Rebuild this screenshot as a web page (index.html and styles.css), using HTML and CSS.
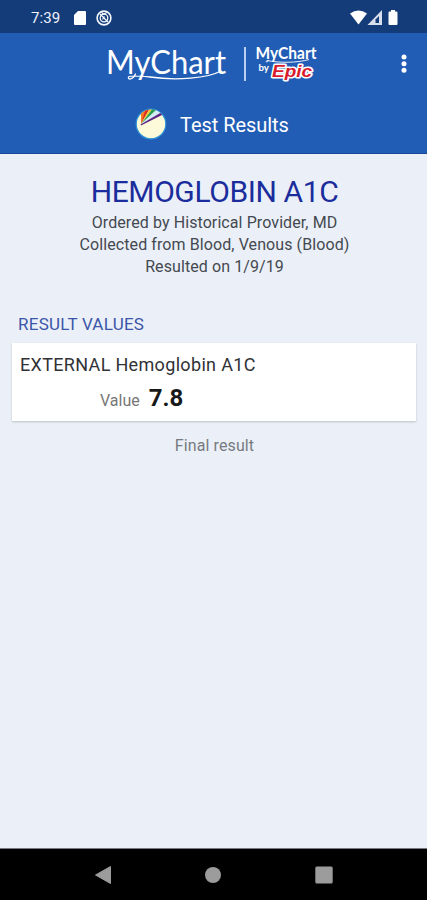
FILE: index.html
```html
<!DOCTYPE html>
<html lang="en">
<head>
<meta charset="utf-8">
<title>Test Results</title>
<link rel="stylesheet" href="styles.css">
</head>
<body>
<div class="status">
  <span class="time">7:39</span>
  <svg class="sd" width="12" height="14" viewBox="0 0 12 14"><path d="M4 0H11Q12 0 12 1V13Q12 14 11 14H1Q0 14 0 13V4Z" fill="#fff"/></svg>
  <svg class="sync" width="16" height="16" viewBox="0 0 16 16" fill="none" stroke="#f4f7fd"><circle cx="8" cy="8" r="6.900" stroke-width="1.600"/><circle cx="8" cy="8" r="3.800" stroke-width="1.300"/><path d="M4 4L12 12M6.500 9.500L8.500 6.500" stroke-width="1.300"/><path d="M5.500 2.500L8 4.200L10.500 2.500" stroke-width="1.200"/></svg>
  <svg class="signals" width="50" height="16" viewBox="0 0 50 16"><path d="M1 3.500Q9.500 -2.500 18 3.500L9.500 14.500Z" fill="#fff"/><path d="M33 0V15H18.500Z" fill="#d9dfec"/><path d="M30 6V13H26.500V9.500Z" fill="#143c78"/><path d="M42 0H46V1.500H47.500Q48.500 1.500 48.500 2.500V14Q48.500 15 47.500 15H40.500Q39.500 15 39.500 14V2.500Q39.500 1.500 40.500 1.500H42Z" fill="#fff"/></svg>
</div>
<header class="header">
  <div class="brand">
    <svg class="logo" width="214" height="46" viewBox="0 0 214 46">
      <text class="wordmark" x="-1" y="32.500" textLength="120" lengthAdjust="spacingAndGlyphs">MyChart</text>
      <path d="M28.500 33C26 39 20.500 39 21.500 36C22.500 34 33 35 43 36C70 40 101 37 114 30" fill="none" stroke="#fff" stroke-width="1.300" stroke-linecap="round"/>
      <rect x="137" y="6" width="2" height="34" fill="#b9cff3"/>
      <text class="wordmark-small" x="148.500" y="17.500" textLength="61" lengthAdjust="spacingAndGlyphs">MyChart</text>
      <path d="M162 19C160 22 158 21 160 19.500C172 22 190 22 202 18.500" fill="none" stroke="#fff" stroke-width=".9"/>
      <text class="by" x="151.500" y="30" textLength="10.500" lengthAdjust="spacingAndGlyphs">by</text>
      <text class="epic" x="165" y="35.500" textLength="40" lengthAdjust="spacingAndGlyphs">Epic</text>
    </svg>
    <svg class="more" width="6" height="20" viewBox="0 0 6 20" fill="#fff"><circle cx="3" cy="3" r="2.500"/><circle cx="3" cy="9.700" r="2.500"/><circle cx="3" cy="16.300" r="2.500"/></svg>
  </div>
  <div class="page">
    <svg width="32" height="32" viewBox="0 0 32 32">
      <defs><clipPath id="disc"><circle cx="16" cy="16" r="14.500"/></clipPath></defs>
      <circle cx="16" cy="16" r="14.800" fill="#fdfad9" stroke="#2d91d5" stroke-width="1.200"/>
      <g clip-path="url(#disc)">
        <path d="M6 16L6 0H12Z" fill="#f57a24"/><path d="M6 16L11 0H15Z" fill="#dc2d24"/><path d="M6 16L15 0H18Z" fill="#f8c92c"/><path d="M6 16L18 0L24 1Z" fill="#2ca052"/><path d="M6 16L22 1L29 4Z" fill="#d3edf6"/>
        <path d="M5.500 16.500L27 4L28 6.500L6 17.500Z" fill="#5b2583"/>
      </g>
    </svg>
    <span class="page-title">Test Results</span>
  </div>
</header>
<main class="main">
  <h1>HEMOGLOBIN A1C</h1>
  <p>Ordered by Historical Provider, MD</p>
  <p>Collected from Blood, Venous (Blood)</p>
  <p>Resulted on 1/9/19</p>
  <h2>RESULT VALUES</h2>
  <section class="card">
    <div class="name">EXTERNAL Hemoglobin A1C</div>
    <div class="result"><span class="label">Value</span><span class="value">7.8</span></div>
  </section>
  <div class="final">Final result</div>
</main>
<nav class="nav">
  <svg width="16" height="18" viewBox="0 0 16 18"><path d="M15.500 .5V17.500L.5 9Z" fill="#9c9c9c" stroke="#9c9c9c" stroke-linejoin="round"/></svg>
  <svg width="16" height="18" viewBox="0 0 16 18"><circle cx="8" cy="9" r="8" fill="#9c9c9c"/></svg>
  <svg width="18" height="18" viewBox="0 0 18 18"><rect x=".3" y=".5" width="17.400" height="17" rx="1.500" fill="#9c9c9c"/></svg>
</nav>
</body>
</html>
```
FILE: styles.css
```css
* { box-sizing: border-box; }
body { margin: 0; height: 900px; display: flex; flex-direction: column; background: #ebf0f8; font-family: Roboto, sans-serif; overflow: hidden; }
svg { display: block; flex: none; }
.status { height: 33px; background: #143c78; display: flex; align-items: center; padding: 2px 28px 0 31px; color: #eef3fc; }
.time { font-size: 15px; letter-spacing: .1px; width: 43px; }
.sync { margin-left: 10px; }
.signals { margin-left: auto; }
.header { height: 121px; background: #225db5; border-bottom: 1px solid #17479a; color: #fff; }
.brand { height: 66px; display: flex; padding-top: 8px; }
.logo { margin-left: 107px; overflow: visible; }
.more { margin: 13px 0 0 80px; }
.wordmark { font: 32px Lato, sans-serif; fill: #fff; }
.wordmark-small { font: 700 17px Lato, sans-serif; fill: #fff; }
.by { font: 700 10px Lato, sans-serif; fill: #fff; }
.epic { font: italic 700 17px "Liberation Sans", sans-serif; fill: #d91b2d; stroke: #fff; stroke-width: 3px; paint-order: stroke; stroke-linejoin: round; }
.page { display: flex; align-items: center; padding: 9px 0 0 135px; gap: 13px; }
.page-title { font-size: 20px; letter-spacing: -.05px; line-height: 24px; padding-top: 2px; }
.main { height: 695px; padding-top: 20px; border-bottom: 1px solid #777a80; text-align: center; }
h1 { margin: 0; font-size: 30px; font-weight: 400; letter-spacing: -.4px; line-height: 36px; height: 38px; padding-left: 2px; color: #1b2d9c; }
p { margin: 0; font-size: 16px; letter-spacing: .09px; line-height: 22px; color: #444950; padding-left: 2px; }
h2 { margin: 36px 0 0 18px; text-align: left; font-size: 17px; font-weight: 400; letter-spacing: .25px; line-height: 20px; color: #3b55a8; }
.card { margin: 9px 11px 0 12px; height: 78px; background: #fff; padding: 10px 8px; text-align: left; box-shadow: 0 1px 2px rgba(0,0,0,.2); }
.name { font-size: 18px; letter-spacing: .33px; line-height: 24px; color: #303236; }
.result { display: flex; align-items: baseline; margin-left: 80px; gap: 9px; height: 30px; margin-top: 6px; }
.label { font-size: 16px; color: #777; }
.value { font-size: 24px; font-weight: 700; line-height: 30px; color: #171819; }
.final { margin-top: 14px; font-size: 16px; letter-spacing: .1px; line-height: 22px; padding-left: 2px; color: #777b80; }
.nav { height: 51px; background: #000; display: flex; justify-content: space-between; align-items: center; padding: 0 94px 0 95px; }
```
